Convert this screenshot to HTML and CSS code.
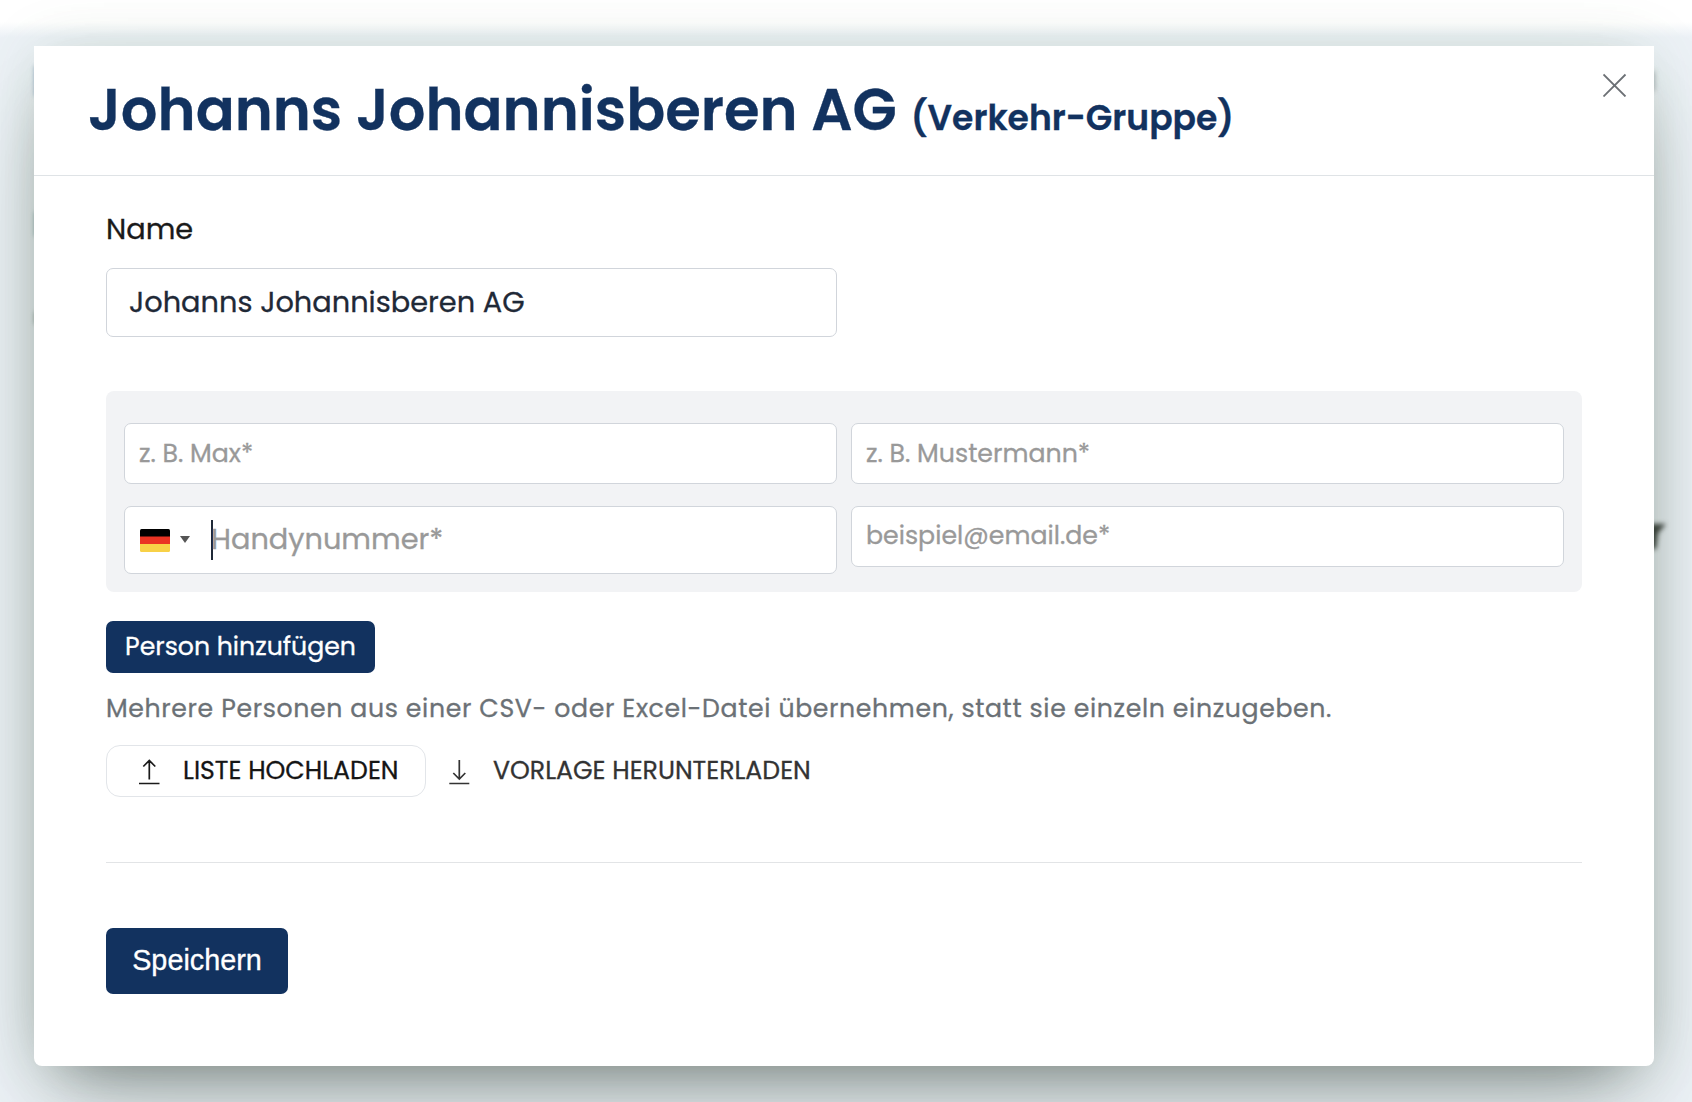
FILE: index.html
```html
<!DOCTYPE html>
<html lang="de">
<head>
<meta charset="utf-8">
<title>Gruppe bearbeiten</title>
<link rel="stylesheet" href="styles.css">
</head>
<body>
<svg class="backdrop" width="1692" height="1102" viewBox="0 0 1692 1102" aria-hidden="true">
  <path d="M1640 524h26l-8 9-2 16h-16z" fill="#3c403d"/>
  <path d="M1640 71h15v20h-15z" fill="#b3b9bd"/>
  <path d="M35 66h6v30h-6z" fill="#7c98b8"/>
  <path d="M35 212h6v24h-6z" fill="#7ca0a4"/>
  <path d="M35 312h6v12h-6z" fill="#7f8f88"/>
</svg>
<main class="modal">
  <header class="modal-header">
    <h1 class="title"><span>Johanns Johannisberen AG</span><small class="subtitle">(Verkehr-Gruppe)</small></h1>
    <button class="close" aria-label="Schließen">
      <svg width="24" height="24" viewBox="0 0 24 24" fill="none" stroke="#6c7075" stroke-width="1.800"><path d="M.5 1.500l22 22M22.500 1.500l-22 22"/></svg>
    </button>
  </header>
  <form class="modal-body">
    <label class="label" for="name">Name</label>
    <input class="field name" id="name" type="text" value="Johanns Johannisberen AG">
    <section class="person">
      <input class="field" type="text" placeholder="z. B. Max*">
      <input class="field" type="text" placeholder="z. B. Mustermann*">
      <div class="field phone">
        <svg class="flag" width="30" height="23" viewBox="0 0 30 23">
          <clipPath id="round"><rect width="30" height="23" rx="1.500"/></clipPath>
          <g clip-path="url(#round)"><path d="M0 0h30v8H0z" fill="#000"/><path d="M0 7.500h30v8H0z" fill="#ea3323"/><path d="M0 15h30v8H0z" fill="#f8d147"/></g>
        </svg>
        <svg class="arrow" width="10" height="7" viewBox="0 0 10 7"><path d="M0 0h10L5 7z" fill="#555"/></svg>
        <span class="caret"></span>
        <input class="phone-input" type="text" placeholder="Handynummer*">
      </div>
      <input class="field email" type="text" placeholder="beispiel@email.de*">
    </section>
    <button class="btn add" type="button">Person hinzufügen</button>
    <p class="help">Mehrere Personen aus einer CSV- oder Excel-Datei übernehmen, statt sie einzeln einzugeben.</p>
    <div class="actions">
      <button class="upload" type="button">
        <svg width="21" height="26" viewBox="0 0 21 26" fill="none" stroke="#1a1a1a" stroke-width="1.700"><path d="M10.300 20.500V1.500M4.300 7.500l6-6 6 6M0 24.500h20.500"/></svg>
        <span>LISTE HOCHLADEN</span>
      </button>
      <a class="download">
        <svg width="21" height="26" viewBox="0 0 21 26" fill="none" stroke="#333" stroke-width="1.700"><path d="M10.300 1v19M4.300 14l6 6 6-6M.3 24.500h20"/></svg>
        <span>VORLAGE HERUNTERLADEN</span>
      </a>
    </div>
    <hr class="rule">
    <button class="btn save" type="button">Speichern</button>
  </form>
</main>
</body>
</html>
```
FILE: styles.css
```css
* { box-sizing: border-box; }

body {
  margin: 0;
  width: 1692px;
  height: 1102px;
  padding: 46px 38px 36px 34px;
  overflow: hidden;
  background: linear-gradient(#fff 0, #fff 22px, #edf2f7 37px);
  font-family: Poppins, Inter, sans-serif;
  -webkit-text-stroke: .3px;
}

button, input { font-family: inherit; margin: 0; -webkit-text-stroke: inherit; }

.backdrop {
  position: absolute;
  left: 0;
  top: 0;
  filter: blur(2.5px);
}

.modal {
  position: relative;
  width: 1620px;
  height: 1020px;
  background: #fff;
  border-radius: 0 0 8px 8px;
  box-shadow:
    0 50px 100px -20px rgba(40, 65, 45, .25),
    0 30px 60px -30px rgba(0, 0, 10, .42),
    0 0 60px -4px rgba(90, 140, 80, .15);
}

.modal-header {
  display: flex;
  justify-content: space-between;
  align-items: flex-start;
  height: 130px;
  padding: 24px 27px 0 54px;
  border-bottom: 1px solid #dfe3e6;
}

.title {
  display: flex;
  align-items: baseline;
  gap: 14px;
  margin: 0;
  color: #12325f;
  font-size: 57.6px;
  font-weight: 600;
  line-height: 80px;
  white-space: nowrap;
}

.subtitle { font-size: 34.56px; }

.close {
  display: flex;
  margin-top: 3px;
  padding: 0;
  border: 0;
  background: none;
}

.modal-body {
  display: flex;
  flex-direction: column;
  align-items: flex-start;
  padding: 33px 72px 72px;
}

.label {
  color: #1a1a1a;
  font-size: 28.8px;
  line-height: 40px;
}

.field {
  width: 100%;
  height: 61px;
  padding: 0 14px;
  border: 1px solid #d1d5db;
  border-radius: 7px;
  background: #fff;
  color: #1f2937;
  font-size: 25.25px;
  outline: 0;
}

.field::placeholder,
.phone-input::placeholder { color: #999; opacity: 1; }

.name {
  width: 731px;
  height: 69px;
  margin-top: 19px;
  padding: 0 22px;
  font-size: 28.8px;
}

.person {
  display: grid;
  grid-template-columns: 1fr 1fr;
  align-items: start;
  gap: 22px 14px;
  width: 100%;
  margin-top: 54px;
  padding: 32px 18px 18px;
  border-radius: 8px;
  background: #f2f3f5;
}

.email { padding-bottom: 2px; }

.phone {
  display: flex;
  align-items: center;
  height: 68px;
  padding-left: 14.5px;
}

.arrow {
  margin-left: 10.5px;
  margin-bottom: 2px;
}

.caret {
  width: 2px;
  height: 40px;
  margin-left: 21px;
  background: #1f2937;
}

.phone-input {
  flex: 1;
  min-width: 0;
  height: 60px;
  margin-left: -2px;
  padding: 0 0 2px;
  border: 0;
  outline: 0;
  background: none;
  font-size: 28.8px;
}

.btn {
  border: 0;
  border-radius: 7px;
  background: #12325f;
  color: #fff;
}

.add {
  width: 269px;
  height: 52px;
  margin-top: 29px;
  padding: 0;
  font-size: 25.2px;
}

.help {
  margin: 17px 0 18px;
  color: #6b7176;
  font-size: 25.2px;
  line-height: 37px;
  letter-spacing: .63px;
  white-space: nowrap;
}

.actions {
  display: flex;
  color: #333;
  font-size: 25.2px;
}

.upload,
.download {
  display: flex;
  align-items: center;
  gap: 23px;
  height: 52px;
  padding: 0;
}

.upload {
  width: 320px;
  padding-left: 32px;
  border: 1px solid #e2e5e9;
  border-radius: 14px;
  background: #fff;
  color: #151515;
  font-size: inherit;
}

.download { padding-left: 23px; }

.upload svg,
.download svg { margin-top: 1px; }

.rule {
  width: 100%;
  height: 1px;
  margin: 65px 0;
  border: 0;
  background: #e2e4e6;
}

.save {
  width: 182px;
  height: 66px;
  padding: 0 0 1px;
  font-family: "Liberation Sans", sans-serif;
  font-size: 28.8px;
}
```
